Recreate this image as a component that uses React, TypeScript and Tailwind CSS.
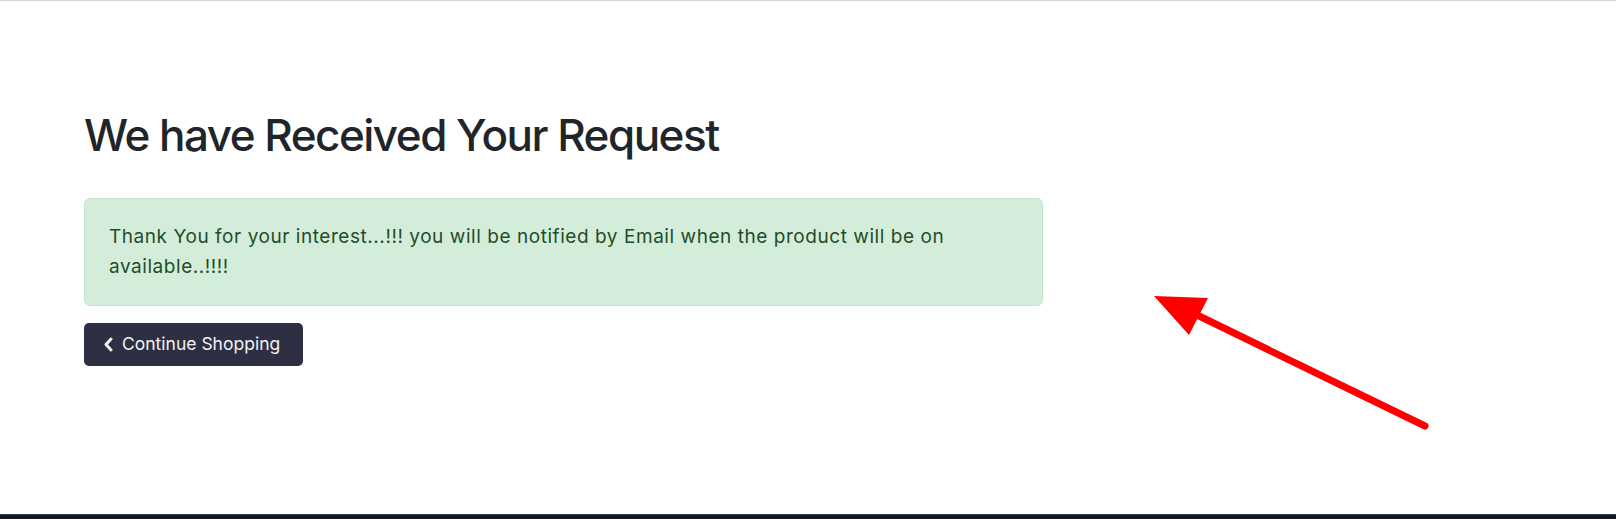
function RedArrow() {
  return (
    <svg
      className="absolute left-[1140px] top-[280px]"
      width="300"
      height="160"
      viewBox="0 0 300 160"
    >
      <line
        x1="55"
        y1="33"
        x2="285"
        y2="145"
        stroke="#ff0000"
        strokeWidth="7"
        strokeLinecap="round"
      />
      <polygon points="14,15 68,17 49,54" fill="#ff0000" />
    </svg>
  );
}

export default function App() {
  return (
    <div
      className="relative h-[519px] w-full overflow-hidden bg-white border-t border-[#d4d4d4] flex flex-col"
      style={{ fontFamily: "Inter, 'Noto Sans', sans-serif" }}
    >
      <main className="flex-1 pl-[84px] pt-[106px]">
        <h1 className="text-[44px] leading-[56px] font-medium tracking-[-1.5px] text-[#212529]">
          We have Received Your Request
        </h1>
        <div className="mt-[35px] w-[959px] h-[108px] rounded-md border border-[#c3e6cb] bg-[#d4edda] px-[24px] pt-[23px] text-[19px] tracking-[0.55px] leading-[30px] text-[#1f4d28]">
          Thank You for your interest...!!! you will be notified by Email when the product will be on
          available..!!!!
        </div>
        <button className="mt-[17px] flex h-[43px] w-[219px] items-center gap-[9px] rounded-[5px] bg-[#2d2f42] pl-[20px] text-[17.5px] text-[#f1f1f5]">
          <svg width="9" height="15" viewBox="0 0 9 15">
            <polyline
              points="7,2 2,7.5 7,13"
              fill="none"
              stroke="currentColor"
              strokeWidth="3"
              strokeLinecap="round"
              strokeLinejoin="round"
            />
          </svg>
          Continue Shopping
        </button>
      </main>
      <RedArrow />
      <footer className="h-[5px] border-t border-[#3b4252] bg-[#111827]" />
    </div>
  );
}
